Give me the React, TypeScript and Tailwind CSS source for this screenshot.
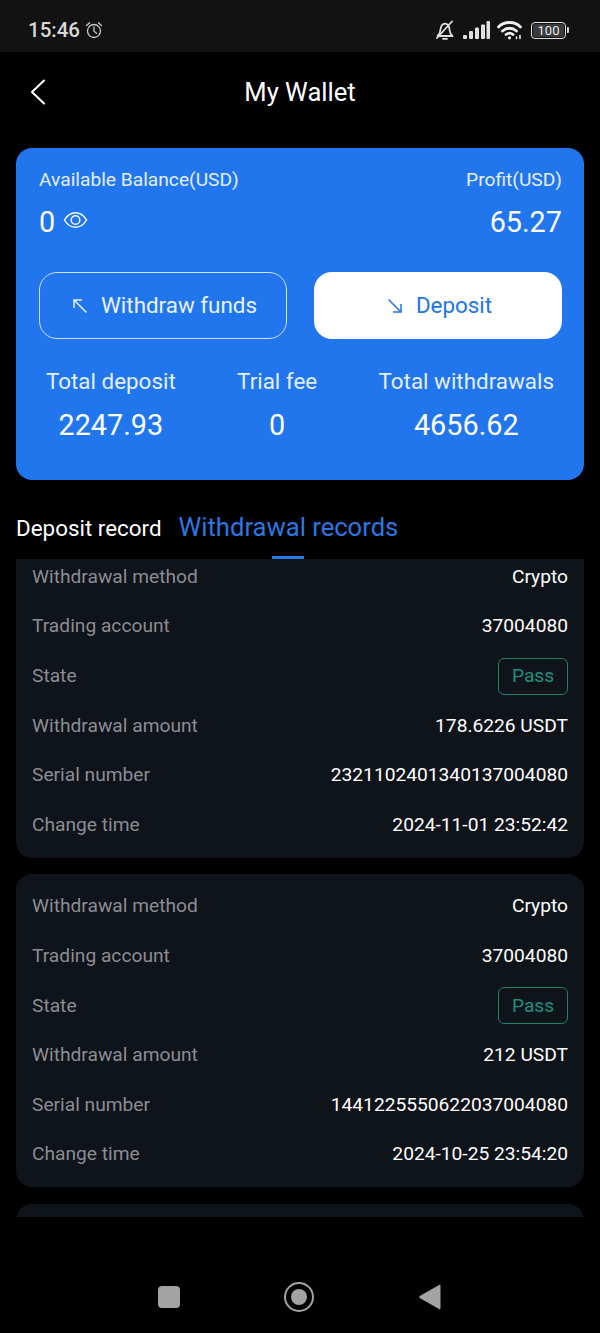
import React from "react";

const Row = ({ label, value, pass }: { label: string; value: string; pass?: boolean }) => (
  <div className="flex h-[49.6px] items-center justify-between">
    <span className="text-[19.2px] text-[#8b8d92]">{label}</span>
    {pass ? (
      <span className="flex h-[37px] w-[70px] items-center justify-center rounded-[6px] border border-[#1f7f70] text-[19.2px] text-[#1f8f7c]">
        {value}
      </span>
    ) : (
      <span className="text-[19.2px] text-white">{value}</span>
    )}
  </div>
);

const RecordCard = ({ amount, serial, time }: { amount: string; serial: string; time: string }) => (
  <div className="rounded-[16px] bg-[#0f131a] px-4 pt-[7.5px] pb-[7.9px]">
    <Row label="Withdrawal method" value="Crypto" />
    <Row label="Trading account" value="37004080" />
    <Row label="State" value="Pass" pass />
    <Row label="Withdrawal amount" value={amount} />
    <Row label="Serial number" value={serial} />
    <Row label="Change time" value={time} />
  </div>
);

const Stat = ({ label, value }: { label: string; value: string }) => (
  <div className="flex flex-col items-center">
    <span className="text-[22.4px] leading-[30px] text-[#e3efff]">{label}</span>
    <span className="mt-[11px] text-[28.8px] leading-[36px] text-white">{value}</span>
  </div>
);

export default function App() {
  return (
    <div className="flex h-[1333px] w-[600px] flex-col overflow-hidden bg-black font-['Roboto',sans-serif]">
      {/* status bar */}
      <div className="flex h-[52px] shrink-0 items-center justify-between bg-[#121212] pr-[31px] pl-[28px] pt-[8px] text-[#d8d8d8]">
        <div className="flex items-center gap-[5px]">
          <span className="text-[20.5px] font-medium leading-none">15:46</span>
          <svg width="18" height="18" viewBox="0 0 18 18" fill="none" stroke="#c8c8c8" strokeWidth="1.3" strokeLinecap="round">
            <circle cx="9" cy="10" r="6.5" />
            <path d="M9 6v4.2l2.8 2.2M1.5 4.6 4.6 1.8M16.5 4.6l-3.1-2.8" />
          </svg>
        </div>
        <div className="flex items-center">
          <svg width="20" height="20" viewBox="0 0 20 20" fill="none" stroke="#e0e0e0" strokeWidth="1.8" strokeLinecap="round" strokeLinejoin="round" className="mr-[8px]">
            <path d="M2.500 16h15c-2-1.500-2.600-3-2.800-5.500C14.400 7 13 3.600 10 3.600S5.600 7 5.300 10.500C5.100 13 4.500 14.500 2.500 16Z" />
            <path d="M8 18.800h4M2 18 17 1.500" />
          </svg>
          <svg width="27" height="18" viewBox="0 0 27 18" fill="#e0e0e0" className="mr-[7px]">
            <rect x="0" y="14" width="4" height="4" rx="1" />
            <rect x="6" y="10" width="4" height="8" rx="1" />
            <rect x="12" y="6.500" width="4" height="11.500" rx="1" />
            <rect x="18" y="3.500" width="4" height="14.500" rx="1" />
            <rect x="23.500" y="0" width="3.500" height="18" rx="1" />
          </svg>
          <svg width="26" height="20" viewBox="0 0 26 20" fill="none" stroke="#eeeeee" strokeWidth="2.8" strokeLinecap="round" className="mr-[8px]">
            <path d="M1.500 7C7 1 18 1 23.500 7" />
            <path d="M5.500 11c4-3.700 10-3.700 14 0" />
            <path d="M9 14.500c2.200-1.700 5-1.700 7 0" />
            <circle cx="12.500" cy="17.800" r="1.600" fill="#eeeeee" stroke="none" />
            <path d="M19.500 18.500v-1.500M23 18.500v-3" strokeWidth="1.600" />
          </svg>
          <div className="flex items-center">
            <div className="flex h-[17px] w-[35px] items-center justify-center rounded-[4px] border-[1.5px] border-[#e0e0e0] p-[1px]">
              <span className="flex h-full w-full items-center justify-center rounded-[2px] bg-[#3a3a3a] text-[13px] leading-none text-[#e8e8e8]">100</span>
            </div>
            <div className="ml-[1px] h-[6px] w-[2px] rounded-r-[1px] bg-[#cfcfcf]" />
          </div>
        </div>
      </div>

      {/* header */}
      <div className="relative flex h-[80px] shrink-0 items-center justify-center">
        <svg width="16" height="26" viewBox="0 0 16 26" fill="none" stroke="#ffffff" strokeWidth="2" strokeLinecap="round" strokeLinejoin="round" className="absolute left-[30px] top-[27px]">
          <path d="M14 1.500 2 13l12 11.500" />
        </svg>
        <span className="text-[25.6px] text-white">My Wallet</span>
      </div>

      {/* balance card */}
      <div className="mx-4 mt-[16px] flex h-[332px] shrink-0 flex-col rounded-[16px] bg-[#2176ee] pr-[22px] pl-[23px] pt-[19px]">
        <div className="flex justify-between">
          <div>
            <div className="text-[19.2px] leading-[26px] text-[#e3efff]">Available Balance(USD)</div>
            <div className="mt-[11px] flex items-start gap-[8px]">
              <span className="text-[28.8px] leading-[36px] text-white">0</span>
              <svg width="25" height="20" viewBox="0 0 26 20" fill="none" stroke="#ffffff" strokeWidth="1.500" className="mt-[6px]">
                <path d="M1.500 10C4.500 5 8.500 2.500 13 2.500S21.500 5 24.500 10C21.500 15 17.500 17.500 13 17.500S4.500 15 1.500 10Z" />
                <circle cx="13" cy="10" r="4.500" />
              </svg>
            </div>
          </div>
          <div className="text-right">
            <div className="text-[19.2px] leading-[26px] text-[#e3efff]">Profit(USD)</div>
            <div className="mt-[11px] text-[28.8px] leading-[36px] text-white">65.27</div>
          </div>
        </div>

        <div className="mt-[32px] flex justify-between">
          <div className="flex h-[67px] w-[248px] items-center justify-center gap-[14px] rounded-[18px] border border-[#cfe2fd] pl-[4px] text-[22.4px] text-[#e8f2ff]">
            <svg width="14" height="14" viewBox="0 0 14 14" fill="none" stroke="#e8f2ff" strokeWidth="1.500">
              <path d="M13.500 13.500 1.500 1.500M1 9V1H9" />
            </svg>
            <span>Withdraw funds</span>
          </div>
          <div className="flex h-[67px] w-[248px] items-center justify-center gap-[14px] rounded-[18px] bg-white pl-[4px] text-[22.4px] text-[#2176e0]">
            <svg width="14" height="14" viewBox="0 0 14 14" fill="none" stroke="#2176e0" strokeWidth="1.500">
              <path d="M.5.500l12 12M13 5v8H5" />
            </svg>
            <span>Deposit</span>
          </div>
        </div>

        <div className="mt-[27px] flex items-start justify-between pr-[8px] pl-[7px]">
          <Stat label="Total deposit" value="2247.93" />
          <Stat label="Trial fee" value="0" />
          <Stat label="Total withdrawals" value="4656.62" />
        </div>
      </div>

      {/* tabs */}
      <div className="relative mx-4 flex h-[79px] shrink-0 items-start gap-[17px] pt-[31px]">
        <span className="text-[22.4px] leading-[34px] text-white">Deposit record</span>
        <span className="relative -mt-[1px] text-[25.6px] leading-[34px] text-[#2a78e0]">
          Withdrawal records
          <span className="absolute bottom-[-15px] left-[93px] h-[3px] w-[32px] bg-[#2a78e0]" />
        </span>
      </div>

      {/* list */}
      <div className="mx-4 h-[658px] shrink-0 overflow-hidden">
        <div className="-mt-[14px] flex flex-col gap-[16.5px]">
          <RecordCard amount="178.6226 USDT" serial="2321102401340137004080" time="2024-11-01 23:52:42" />
          <RecordCard amount="212 USDT" serial="1441225550622037004080" time="2024-10-25 23:54:20" />
          <div className="h-[313px] rounded-[16px] bg-[#0f131a]" />
        </div>
      </div>

      {/* nav bar */}
      <div className="flex flex-1 items-center pt-[44px]">
        <div className="ml-[158px] h-[22px] w-[22px] rounded-[4px] bg-[#a3a3a3]" />
        <div className="ml-[104px] flex h-[30px] w-[30px] items-center justify-center rounded-full border-[2.5px] border-[#a3a3a3]">
          <div className="h-[16px] w-[16px] rounded-full bg-[#a3a3a3]" />
        </div>
        <svg width="22" height="26" viewBox="0 0 22 26" fill="#a3a3a3" className="ml-[105px]">
          <path d="M20.500 0.800C21.300 .5 21.500 1 21.500 1.800V24C21.500 25 21 25.500 20 25L1.200 14.200C0 13.500 0 12.500 1.200 11.800Z" />
        </svg>
      </div>
    </div>
  );
}
